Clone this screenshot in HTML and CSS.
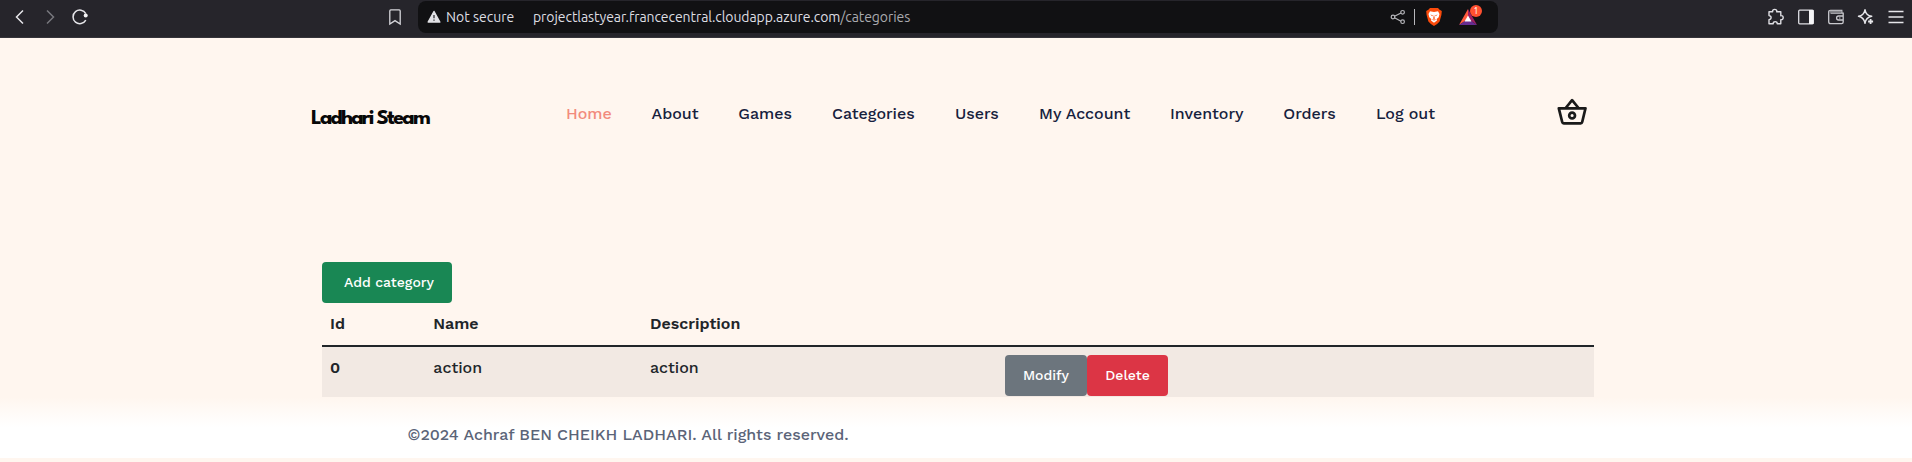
FILE: index.html
```html
<!DOCTYPE html>
<html lang="en">
<head>
<meta charset="utf-8">
<title>Ladhari Steam - Categories</title>
<link rel="stylesheet" href="styles.css">
</head>
<body>
<div class="browser">
  <div class="controls">
    <svg class="ico" viewBox="0 0 20 20"><path d="M13 3.5 6.5 10l6.500 6.500" stroke="#e6e6ea" stroke-width="1.500"/></svg>
    <svg class="ico" viewBox="0 0 20 20"><path d="M7 3.500 13.500 10 7 16.500" stroke="#77777d" stroke-width="1.500"/></svg>
    <svg class="ico" viewBox="0 0 20 20"><path d="M15.800 13.200A6.800 6.800 0 1 1 15.800 6.600" stroke="#e6e6ea" stroke-width="1.500"/><circle cx="15.700" cy="8.500" r="2" fill="#f4f4f6"/></svg>
  </div>
  <svg class="ico bookmark" viewBox="0 0 20 20"><path d="M4.800 3.900q0-1 1-1h8.400q1 0 1 1v13.200L10 13.600l-5.200 3.500z" stroke="#d5d5da" stroke-width="1.300"/></svg>
  <div class="address">
    <svg class="warn" viewBox="0 0 14 14"><path d="M7 1.500 12.800 12H1.200z" fill="#e2e2e6" stroke="#e2e2e6" stroke-width="1.500" stroke-linejoin="round"/><path d="M7 5v3.300M7 9.500v1.300" stroke="#303034" stroke-width="1.300"/></svg>
    <span class="security">Not secure</span>
    <span class="url">projectlastyear.francecentral.cloudapp.azure.com<span class="path">/categories</span></span>
    <div class="address-tools">
      <svg class="share" viewBox="0 0 16 16"><g stroke="#b5b5b9" stroke-width="1.200"><path d="M4.500 7.200 11 4M4.500 8.800 11 12.200"/><circle cx="3" cy="8" r="1.800"/><circle cx="12.600" cy="3.300" r="1.800"/><circle cx="12.600" cy="12.700" r="1.800"/></g></svg>
      <i class="divider"></i>
      <svg class="shield" viewBox="0 0 16 18"><path d="M4 0h8l1.600 1.700L15.800 3l-.4 4-1.800 6.500Q12 15.700 8 18 4 15.700 2.400 13.500L.6 7l-.4-4 2.200-1.300z" fill="#fb4b0b"/><path d="M4 3.300 8 4l4-.7 1.500 2.800-.8 3.200-2 1.600.3 1.700L8 14.800l-3-2.200.3-1.700-2-1.600-.8-3.200z" fill="#fff"/><path d="m4.300 6.400 2.500.8-.5 1zM11.700 6.400l-2.500.8.5 1zM8 6.500l.8 4-.8.800-.8-.8zM5.500 11.500 8 12.500l2.500-1" fill="#fb4b0b"/></svg>
      <div class="rewards">
        <svg class="triangle" viewBox="0 0 18 16"><path d="M9 0 0 16l9-6z" fill="#ff5a3c"/><path d="m9 0 9 16-9-6z" fill="#9e1f63"/><path d="M0 16h18l-9-6z" fill="#662d91"/><path d="m9 6.500 3.500 6h-7z" fill="#fff"/></svg>
        <span class="badge">1</span>
      </div>
    </div>
  </div>
  <div class="extensions">
    <svg class="ico" viewBox="0 0 20 20"><path d="M3 4.800h3.700c-1-3.300 5-3.300 4 0h4.100v3.900c3.200-.8 3.200 4.600 0 3.900v4.100h-3.600c.2-2.800-4.200-2.800-4 0H3v-4.100c2.800-.2 2.800-3.800 0-4z" stroke="#dedee3" stroke-width="1.400" stroke-linejoin="round"/></svg>
    <svg class="ico" viewBox="0 0 20 20"><rect x="2.700" y="3.200" width="14.600" height="13.600" rx="1" stroke="#dedee3" stroke-width="1.300"/><path d="M13 3h4.500v14H13z" fill="#f4f4f6"/></svg>
    <svg class="ico" viewBox="0 0 20 20"><path d="M15.800 6.200V3.300H4.500Q2.700 3.300 2.700 5v9.800q0 1.900 1.900 1.900h11q1.600 0 1.600-1.600V6.200H4.500M17 9h-4.400q-2 0-2 2t2 2H17" stroke="#c9c9ce" stroke-width="1.300"/><path d="M3.500 4.700h12" stroke="#85858a" stroke-width="2"/><path d="M13 11h1.500" stroke="#c9c9ce"/></svg>
    <svg class="ico" viewBox="0 0 20 20"><path d="M9 2.600Q9.800 8.300 15.700 9.300 9.800 10.500 9 16.300 8 10.500 2.500 9.300 8 8.300 9 2.600z" stroke="#e6e6ea" stroke-width="1.400" stroke-linejoin="round"/><path d="M14.600 12v5M12.100 14.500h5" stroke="#e6e6ea" stroke-width="1.800"/></svg>
    <svg class="ico" viewBox="0 0 20 20"><path d="M2.500 4.500h15M2.500 10h15M2.500 15.500h15" stroke="#e6e6ea" stroke-width="1.300"/></svg>
  </div>
</div>
<header class="site-header">
  <a class="logo">Ladhari Steam</a>
  <nav class="menu">
    <a class="home active">Home</a><a class="about">About</a><a class="games">Games</a><a class="categories">Categories</a><a class="users">Users</a><a class="account">My Account</a><a class="inventory">Inventory</a><a class="orders">Orders</a><a class="logout">Log out</a>
  </nav>
  <svg class="basket" viewBox="0 0 30 27"><g fill="none" stroke="#1a1a1a" stroke-width="2.700" stroke-linejoin="round"><path d="M1.800 10.300h26.700L25.200 24Q24.900 25.300 23.700 25.300H6.700Q5.500 25.300 5.200 24z"/><path d="m8.700 10 6.400-7.800 6.400 7.800"/><circle cx="15.100" cy="17.500" r="2.900"/></g></svg>
</header>
<main class="content">
  <a class="btn add">Add category</a>
  <div class="table">
    <div class="row head"><span>Id</span><span>Name</span><span>Description</span></div>
    <div class="row item"><b>0</b><span>action</span><span>action</span><div class="actions"><a class="btn modify">Modify</a><a class="btn delete">Delete</a></div></div>
  </div>
</main>
<footer class="footer"><p class="copyright">©2024 Achraf BEN CHEIKH LADHARI. All rights reserved.</p></footer>
</body>
</html>
```
FILE: styles.css
```css
* { box-sizing: border-box; }
body { margin: 0; height: 462px; overflow: hidden; background: #fff6ef; color: #212529; font: 500 16px/24px "Work Sans", Inter, sans-serif; }
.browser { display: flex; height: 38px; background: #26252b; border-bottom: 1px solid #35343a; padding-bottom: 3px; align-items: center; }
.ico { width: 20px; height: 20px; fill: none; flex: none; }
.controls { display: flex; gap: 10px; padding-left: 10px; width: 385px; }
.bookmark { margin-right: 13px; }
.address { display: flex; align-items: center; width: 1080px; height: 32px; margin-bottom: 1px; padding-left: 8px; border-radius: 8px; background: #111113; color: #dedee2; font: 400 14px/20px "Ubuntu", "Noto Sans", sans-serif; white-space: nowrap; }
.warn { width: 16px; height: 14px; flex: none; }
.security { width: 91px; padding-left: 4px; }
.url { letter-spacing: -0.07px; flex: 1; }
.path { color: #aaaaae; }
.address-tools { display: flex; align-items: center; width: 108px; }
.share { width: 16px; height: 16px; fill: none; }
.divider { width: 1px; height: 16px; background: #b8b8bc; margin: 0 11px 0 8px; }
.shield { width: 16px; height: 18px; }
.rewards { position: relative; display: flex; margin-left: 17px; }
.triangle { width: 18px; height: 16px; }
.badge { position: absolute; left: 11px; top: -4px; width: 12px; height: 12px; border-radius: 50%; background: #ff5030; color: #fff; font: 8px/12px "Noto Sans", sans-serif; text-align: center; }
.extensions { display: flex; gap: 10px; margin-left: auto; padding-right: 6px; }
.site-header { display: flex; width: 1290px; height: 224px; padding-top: 60px; margin-left: 311px; align-items: flex-start; }
.logo { width: 255px; font: 700 22px/24px "League Spartan", Jost, Outfit, Lato, sans-serif; letter-spacing: -1.85px; color: #080808; padding-top: 9px; white-space: nowrap; }
.menu { display: flex; gap: 40px; padding-top: 4px; width: 991px; color: #16213d; white-space: nowrap; }
.active { color: #f28b7d; }
.home { width: 45.500px; }
.about { width: 46.800px; }
.games { width: 53.700px; }
.categories { width: 83px; }
.users { width: 44px; }
.account { width: 91px; }
.inventory { width: 73.300px; }
.orders { width: 52.700px; }
.logout { width: 60px; }
.basket { width: 30px; height: 27px; }
.content { width: 1272px; margin-left: 322px; }
.btn { display: block; height: 41px; border-radius: 4px; color: #fff; font-size: 14px; line-height: 41px; text-align: center; }
.add { width: 130px; background: #198754; padding-left: 4px; }
.row { display: grid; grid-template-columns: 103.300px 216.700px 355px 1fr; padding: 9px 0 0 8px; }
.head { height: 44px; font-weight: 600; border-bottom: 2px solid #212529; }
.item { height: 50px; background: #f2e9e3; }
b { font-weight: 600; }
.actions { display: flex; margin-top: -1px; }
.modify { width: 82px; background: #6c757d; }
.delete { width: 81px; background: #dc3545; }
.footer { height: 61px; padding: 26px 0 0 407.500px; background: linear-gradient(#fff6ef, #fff 50%); }
.copyright { margin: 0; color: #5b6478; white-space: nowrap; }
```
